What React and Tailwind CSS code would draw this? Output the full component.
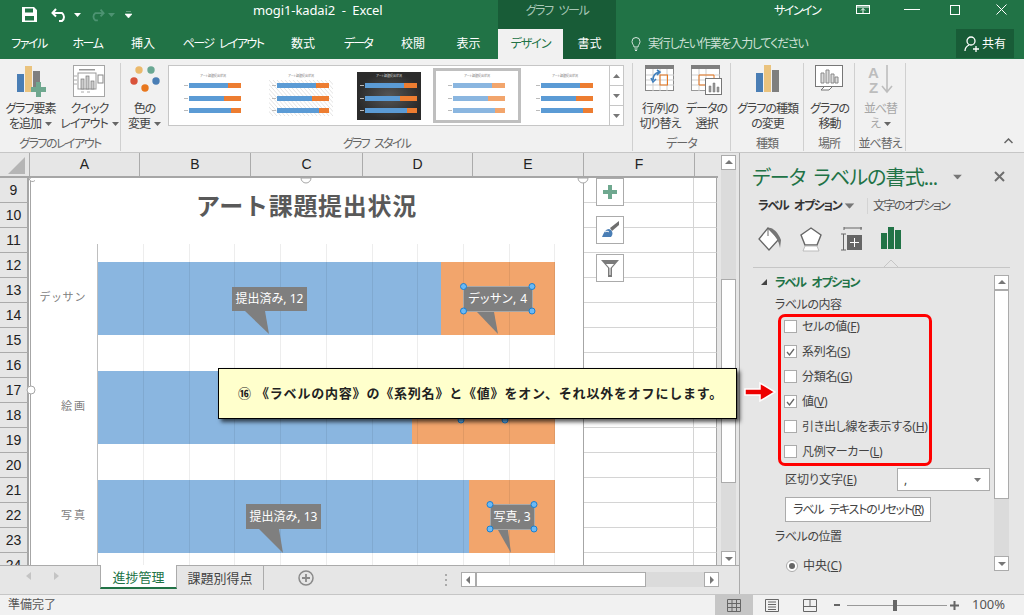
import React from "react";

const ROWS = [9, 10, 11, 12, 13, 14, 15, 16, 17, 18, 19, 20, 21, 22, 23, 24];
const COLS = [
  { name: "A", w: "w-[110px]" },
  { name: "B", w: "w-[111px]" },
  { name: "C", w: "w-[112px]" },
  { name: "D", w: "w-[110px]" },
  { name: "E", w: "w-[111px]" },
  { name: "F", w: "w-[111px]" },
];
const TABS = [
  { label: "ファイル", w: "w-[58px]", t: "tracking-[-1.5px]" },
  { label: "ホーム", w: "w-[59px]", t: "tracking-[-1.5px]" },
  { label: "挿入", w: "w-[52px]", t: "" },
  { label: "ページ レイアウト", w: "w-[108px]", t: "tracking-[-1.600px] [word-spacing:4px]" },
  { label: "数式", w: "w-[52px]", t: "" },
  { label: "データ", w: "w-[58px]", t: "tracking-[-1.800px]" },
  { label: "校閲", w: "w-[52px]", t: "" },
  { label: "表示", w: "w-[59px]", t: "" },
];
const GRID_X = [143, 189, 234, 280, 326, 372, 417, 463, 509, 554];
const BARS = [
  { y: 262, split: 441, name: "デッサン", labelY: 301 },
  { y: 371, split: 412, name: "絵画", labelY: 410 },
  { y: 480, split: 469, name: "写真", labelY: 519 },
];
const CHECKS = [
  { text: "セルの値", key: "F", on: false },
  { text: "系列名", key: "S", on: true },
  { text: "分類名", key: "G", on: false },
  { text: "値", key: "V", on: true },
  { text: "引き出し線を表示する", key: "H", on: false },
  { text: "凡例マーカー", key: "L", on: false },
];
const HATCH = [-28, -24, -20, -16, -12, -8, -4, 0, 4, 8, 12, 16, 20, 24, 28, 32, 36, 40, 44, 48, 52, 56, 60];

function Caret({ className = "" }) {
  return (
    <svg width="7" height="4" viewBox="0 0 7 4" className={"inline-block " + className}>
      <path d="M0 0h7L3.5 4z" fill="currentColor" />
    </svg>
  );
}

function Thumb({ variant }) {
  const dark = variant === "dark";
  const light = variant === "light";
  const blue = light ? "#8ab6e0" : "#5b9bd5";
  const orange = light ? "#f2a56c" : "#ed7d31";
  const splits = [39, 35, 42];
  return (
    <svg width="64" height="48" viewBox="0 0 64 48" className="block shrink-0">
      <defs>
        <radialGradient id="darkBg">
          <stop offset="0" stopColor="#555" />
          <stop offset="1" stopColor="#2b2b2b" />
        </radialGradient>
      </defs>
      <rect width="64" height="48" fill={dark ? "url(#darkBg)" : "#fff"} />
      {variant === "hatch" &&
        HATCH.map((x) => (
          <path key={x} d={`M${x} 8L${x + 32} 44`} stroke="#d8d8d8" strokeWidth="0.7" />
        ))}
      <text x="32" y="5" fontSize="3" textAnchor="middle" fill={dark ? "#ddd" : "#777"}>
        アート課題提出状況
      </text>
      {[11, 24, 36].map((y, i) => (
        <g key={y}>
          <rect x="3" y={y + 2} width="4" height="1" fill="#bbb" />
          <rect x="8" y={y} width={splits[i]} height="5" fill={blue} />
          <rect x={8 + splits[i]} y={y} width={52 - splits[i]} height="5" fill={orange} />
        </g>
      ))}
    </svg>
  );
}

function Big({ icon, lines, caret, w = "w-[54px]", muted }) {
  return (
    <div className={"flex flex-col items-center shrink-0 tracking-[-1px] " + w + (muted ? " text-[#a6a6a6]" : " text-[#444]")}>
      <div className="h-[36px] flex items-start justify-center">{icon}</div>
      {lines.map((line, i) => (
        <div key={i} className="text-[12px] leading-[15px] whitespace-nowrap">
          {line}
          {caret && i === lines.length - 1 && <Caret className="ml-[4px] mb-[2px] text-[#666]" />}
        </div>
      ))}
    </div>
  );
}

function Group({ w, label, children, last, t = "tracking-[-1px]" }) {
  return (
    <div className={"h-[88px] flex flex-col shrink-0 " + w + (last ? "" : " border-r border-[#d0d0d0]")}>
      <div className="flex-1 flex pt-[2px] min-h-0">{children}</div>
      <div className={"text-[12px] leading-[15px] text-[#666] text-center whitespace-nowrap h-[15px] " + t}>{label}</div>
    </div>
  );
}

const AddElementIcon = (
  <svg width="30" height="32" viewBox="0 0 30 32">
    <rect x="1" y="9" width="7" height="18" fill="#4a7eb5" />
    <rect x="9" y="1" width="7" height="26" fill="#eac37e" />
    <rect x="17" y="6" width="7" height="21" fill="#7f7f7f" />
    <path d="M20 17h5v5h5v5h-5v5h-5v-5h-5v-5h5z" fill="#6fa88f" />
  </svg>
);
const QuickIcon = (
  <svg width="33" height="32" viewBox="0 0 33 32">
    <rect x="0.5" y="0.5" width="31" height="31" fill="#fff" stroke="#a6a6a6" />
    <rect x="6" y="4" width="16" height="1.5" fill="#999" />
    <rect x="5" y="8" width="18" height="16" fill="none" stroke="#999" />
    <rect x="8" y="14" width="3" height="10" fill="#ccc" stroke="#777" strokeWidth="0.7" />
    <rect x="13" y="11" width="3" height="13" fill="#ccc" stroke="#777" strokeWidth="0.7" />
    <rect x="18" y="16" width="3" height="8" fill="#ccc" stroke="#777" strokeWidth="0.7" />
    <rect x="25" y="10" width="5" height="8" fill="#fff" stroke="#888" />
    <path d="M1 11h3M1 15h3M1 19h3M8 27h3M14 27h3" stroke="#aaa" />
  </svg>
);
const ColorsIcon = (
  <svg width="30" height="28" viewBox="0 0 30 28">
    <circle cx="9" cy="5" r="3.7" fill="#ebb96b" />
    <circle cx="21" cy="5" r="3.7" fill="#6aa893" />
    <circle cx="4" cy="16" r="3.7" fill="#d9533a" />
    <circle cx="26" cy="16" r="3.7" fill="#4a7eb5" />
    <circle cx="15" cy="23" r="3.7" fill="#e8771e" />
  </svg>
);
const SwitchIcon = (
  <svg width="30" height="27" viewBox="0 0 30 27">
    <rect x="0.5" y="0.5" width="28" height="25" fill="#fff" stroke="#888" />
    <rect width="29" height="4" fill="#7f7f7f" />
    <path d="M1 10h28M1 15h28M1 20h28M8 4v22M15 4v22M22 4v22" stroke="#cfcfcf" />
    <rect x="15" y="10" width="7.5" height="10" fill="none" stroke="#e8771e" />
    <path d="M14 7c-4 1-6 4-6 8M6 13l2 4 3-3M12 5l3 2-3 3" fill="none" stroke="#3f7fbd" strokeWidth="1.6" />
  </svg>
);
const SelectIcon = (
  <svg width="32" height="30" viewBox="0 0 32 30">
    <rect x="0.5" y="0.5" width="28" height="25" fill="#fff" stroke="#999" />
    <rect width="29" height="4" fill="#7f7f7f" />
    <path d="M1 10h28M1 15h28M1 20h28M8 4v22M15 4v22" stroke="#cfcfcf" />
    <path d="M8 10h15v10H8z" fill="none" stroke="#e8771e" />
    <rect x="14.5" y="13.5" width="16" height="16" fill="#fff" stroke="#777" />
    <path d="M18 27v-6h2v6zM22 27V18h2v9zM26 27v-5h2v5z" fill="#999" stroke="#777" strokeWidth="0.5" />
  </svg>
);
const TypeIcon = (
  <svg width="24" height="27" viewBox="0 0 24 27">
    <rect y="8" width="7" height="19" fill="#4a7eb5" />
    <rect x="8" width="7" height="27" fill="#eac37e" />
    <rect x="16" y="5" width="7" height="22" fill="#7f7f7f" />
  </svg>
);
const MoveIcon = (
  <svg width="29" height="26" viewBox="0 0 29 26">
    <rect x="0.5" y="0.5" width="27" height="21" fill="#fff" stroke="#777" />
    <path d="M6 18V8h3v10zM11 18V5h3v13zM16 18V9h3v9zM20 18v-6h3v6z" fill="#ddd" stroke="#888" />
    <path d="M9 22l-3 3h8l3-3" fill="#fff" stroke="#777" />
  </svg>
);
const SortIcon = (
  <svg width="26" height="29" viewBox="0 0 26 29">
    <text x="0" y="13" fontSize="15" fontWeight="700" fill="#bdbdbd" fontFamily="'Liberation Sans', sans-serif">A</text>
    <text x="1" y="28" fontSize="15" fontWeight="700" fill="#bdbdbd" fontFamily="'Liberation Sans', sans-serif">Z</text>
    <path d="M19 0v27M14 21l5 6 5-6" fill="none" stroke="#bdbdbd" strokeWidth="1.6" />
  </svg>
);

function Pointer({ d }) {
  return <path d={d} fill="#7f7f7f" />;
}

function Handles({ pts }) {
  return pts.map(([x, y]) => (
    <circle key={x + "-" + y} cx={x} cy={y} r="3" fill="#6cb9f5" stroke="#1b7fd0" strokeWidth="1" />
  ));
}

function Chart() {
  return (
    <svg
      width="590"
      height="388"
      viewBox="0 178 590 388"
      className="absolute left-0 top-0"
    >
      <rect x="30.5" y="177.500" width="553" height="390" fill="#fff" stroke="#a6a6a6" />
      <text x="306.5" y="215" textAnchor="middle" fontSize="24" fontWeight="700" letterSpacing="0.7" fill="#595959" style={{ fontFeatureSettings: "normal" }}>
        アート課題提出状況
      </text>
      <path d="M97.5 244V566" stroke="#bfbfbf" />
      {BARS.map((b) => (
        <g key={b.name}>
          <rect x="98" y={b.y} width={b.split - 98} height="73" fill="#8ab6e0" />
          <rect x={b.split} y={b.y} width={555 - b.split} height="73" fill="#f2a56c" />
          <text x="87" y={b.labelY} textAnchor="end" fontSize="11" letterSpacing="2" fill="#7f7f7f">
            {b.name}
          </text>
        </g>
      ))}
      {GRID_X.map((x) => (
        <path key={x} d={`M${x + 0.5} 244V566`} stroke="#000" strokeOpacity="0.07" />
      ))}

      <rect x="232" y="287" width="75" height="24" fill="#7f7f7f" />
      <Pointer d="M245 311L269 334L265 311z" />
      <text x="269.5" y="303" textAnchor="middle" fontSize="12" fill="#fff">提出済み, 12</text>

      <rect x="463.5" y="286.5" width="69" height="25" fill="#7f7f7f" stroke="#a8a8a8" />
      <Pointer d="M477 312L498 334L494 312z" />
      <text x="498" y="303" textAnchor="middle" fontSize="12" letterSpacing="0.5" fill="#fff">デッサン, 4</text>
      <Handles pts={[[463.5, 286.5], [532, 286.5], [463.5, 311], [532, 311]]} />

      <Handles pts={[[461, 420], [505, 420]]} />

      <rect x="246" y="504" width="75" height="25" fill="#7f7f7f" />
      <Pointer d="M259 529L283 553L279 529z" />
      <text x="283.5" y="521" textAnchor="middle" fontSize="12" fill="#fff">提出済み, 13</text>

      <rect x="490.5" y="504.5" width="44" height="25" fill="#7f7f7f" stroke="#a8a8a8" />
      <Pointer d="M498 530L511 553L508 530z" />
      <text x="512" y="521" textAnchor="middle" fontSize="12" fill="#fff">写真, 3</text>
      <Handles pts={[[490, 504.5], [534, 504.5], [490, 529], [534, 529]]} />

      <path d="M29 178a3.500 3.500 0 0 0 6 2.500" fill="#fff" stroke="#a6a6a6" />
      <path d="M301 178a5 5 0 0 0 10 0z" fill="#fff" stroke="#a6a6a6" />
      <path d="M578 178a5 5 0 0 0 10 0z" fill="#fff" stroke="#a6a6a6" />
      <circle cx="31" cy="390" r="4" fill="#fff" stroke="#a6a6a6" />
    </svg>
  );
}

function ChartButton({ children }) {
  return (
    <div className="w-[28px] h-[28px] bg-white border border-[#ababab] flex items-center justify-center">
      {children}
    </div>
  );
}

function ScrollBtn({ dir, className = "" }) {
  const d = { up: "M1 6L5 2l4 4z", down: "M1 3l4 4 4-4z", left: "M6 1L2 5l4 4z", right: "M3 1l4 4-4 4z" }[dir];
  return (
    <div className={"w-[15px] h-[15px] bg-white border border-[#ababab] flex items-center justify-center shrink-0 " + className}>
      <svg width="10" height="10" viewBox="0 0 10 10">
        <path d={d} fill="#777" />
      </svg>
    </div>
  );
}

function Sheet() {
  return (
    <div className="w-[739px] shrink-0 flex flex-col bg-[#e6e6e6]">
      <div className="flex h-[413px] shrink-0">
        <div className="w-[718px] flex flex-col shrink-0">
          {/* 列ヘッダー */}
          <div className="h-[25px] flex border-b-2 border-[#a6a6a6] shrink-0">
            <div className="w-[29px] relative shrink-0">
              <svg width="18" height="18" viewBox="0 0 18 18" className="absolute left-[8px] top-[4px]">
                <path d="M17 0v17H0z" fill="#b5b5b5" />
              </svg>
            </div>
            {COLS.map((c) => (
              <div
                key={c.name}
                className={c.w + " shrink-0 border-l border-[#ababab] text-center text-[14px] leading-[23px] text-[#222] font-['Liberation_Sans',sans-serif]"}
              >
                {c.name}
              </div>
            ))}
            <div className="w-[23px] border-l border-[#ababab] shrink-0" />
          </div>

          {/* 行ヘッダー + グリッド */}
          <div className="relative overflow-hidden h-[388px]">
            <div className="flex flex-col">
              {ROWS.map((r) => (
                <div key={r} className="flex h-[25px] shrink-0">
                  <div className="w-[29px] border-b border-[#ababab] border-r-2 border-r-[#a6a6a6] text-center text-[14px] leading-[24px] text-[#222] font-['Liberation_Sans',sans-serif] shrink-0">
                    {r}
                  </div>
                  <div className="w-[554px] bg-white shrink-0" />
                  <div className="w-[111px] bg-white border-b border-r border-[#d4d4d4] shrink-0" />
                  <div className="w-[23px] bg-white border-b border-[#d4d4d4] border-r border-r-[#a6a6a6] shrink-0" />
                </div>
              ))}
            </div>
            <Chart />
            <div className="absolute left-[596px] top-0 flex flex-col gap-[10px]">
              <ChartButton>
                <svg width="16" height="16" viewBox="0 0 16 16">
                  <path d="M6 1h4v5h5v4h-5v5H6v-5H1V6h5z" fill="#6fa88f" />
                </svg>
              </ChartButton>
              <ChartButton>
                <svg width="20" height="20" viewBox="0 0 20 20">
                  <path d="M19 1l-9 7 2 3 7-6z" fill="#6e6e6e" />
                  <path d="M9 9c-3 0-5 3-7 8h9c2-2 2-5 0-7z" fill="#4a7eb5" />
                  <path d="M5 12c1-1 3-1 4 0" stroke="#fff" fill="none" />
                </svg>
              </ChartButton>
              <ChartButton>
                <svg width="20" height="20" viewBox="0 0 20 20">
                  <path d="M1 2h18l-7 8v9H8v-9zM6 6l3.5 4v7h1v-7l3.500-4z" fill="#7a7a7a" fillRule="evenodd" />
                </svg>
              </ChartButton>
            </div>
          </div>
        </div>

        {/* 縦スクロール */}
        <div className="ml-[3px] mt-[2px] w-[15px] flex flex-col bg-[#dbdbdb] shrink-0 h-[411px]">
          <ScrollBtn dir="up" />
          <div className="h-[109px]" />
          <div className="h-[204px] bg-white border border-[#ababab]" />
          <div className="flex-1" />
          <ScrollBtn dir="down" />
        </div>
      </div>

      {/* シートタブ */}
      <div className="h-[28px] flex items-start shrink-0 border-t border-[#ababab] -mt-px relative">
        <div className="w-[100px] h-[20px] flex items-center pl-[26px] gap-[22px] shrink-0">
          <svg width="6" height="8" viewBox="0 0 6 8"><path d="M5 0v8L0 4z" fill="#c4c4c4" /></svg>
          <svg width="6" height="8" viewBox="0 0 6 8"><path d="M0 0v8l5-4z" fill="#c4c4c4" /></svg>
        </div>
        <div className="w-[77px] h-[24px] bg-white border-x border-[#ababab] border-b-2 border-b-[#217346] -mt-px text-[#217346] text-[13px] leading-[24px] text-center shrink-0">
          進捗管理
        </div>
        <div className="w-[87px] h-[24px] border-r border-[#ababab] text-[#444] text-[13px] leading-[24px] text-center shrink-0">
          課題別得点
        </div>
        <svg width="16" height="16" viewBox="0 0 16 16" className="ml-[34px] mt-[4px] shrink-0">
          <circle cx="8" cy="8" r="7" fill="none" stroke="#8a8a8a" strokeWidth="1.5" />
          <path d="M8 4v8M4 8h8" stroke="#8a8a8a" strokeWidth="1.8" />
        </svg>
        <div className="ml-[131px] mt-[8px] flex flex-col gap-[3px] shrink-0">
          <div className="w-[2px] h-[2px] bg-[#aaa]" />
          <div className="w-[2px] h-[2px] bg-[#aaa]" />
          <div className="w-[2px] h-[2px] bg-[#aaa]" />
        </div>
        <div className="ml-[14px] mt-[6px] w-[258px] h-[15px] flex bg-[#dbdbdb] shrink-0">
          <ScrollBtn dir="left" />
          <div className="w-[170px] bg-white border border-[#ababab]" />
          <div className="flex-1" />
          <ScrollBtn dir="right" />
        </div>
      </div>
    </div>
  );
}

function Pane() {
  return (
    <div className="flex-1 bg-[#e6e6e6] border-l border-[#ababab] flex flex-col overflow-hidden relative">
      <div className="h-[41px] flex items-start pl-[12px] pt-[11px] shrink-0">
        <div className="text-[20px] leading-[28px] text-[#217346] whitespace-nowrap w-[199px] tracking-[-0.900px] [word-spacing:4px]">データ ラベルの書式...</div>
        <Caret className="mt-[11px] ml-[3px] text-[#777] scale-[1.3]" />
        <svg width="11" height="11" viewBox="0 0 11 11" className="ml-[33px] mt-[7px]">
          <path d="M1 1l9 9M10 1l-9 9" stroke="#6e6e6e" strokeWidth="2" />
        </svg>
      </div>
      <div className="h-[24px] flex items-center pl-[18px] shrink-0 text-[12px] whitespace-nowrap">
        <span className="font-bold text-[#333] w-[87px] tracking-[-1.400px] [word-spacing:4px]">ラベル オプション</span>
        <Caret className="scale-[1.4] text-[#777] ml-[1px]" />
        <span className="w-px h-[16px] bg-[#d4d4d4] ml-[14px]" />
        <span className="text-[#555] ml-[5px] tracking-[-1.500px]">文字のオプション</span>
      </div>

      <div className="h-[49px] flex items-start pl-[18px] gap-[17px] shrink-0 pt-[9px]">
        <svg width="25" height="25" viewBox="0 0 25 25">
          <path d="M10 1L1 12l10 11 10-11z" fill="#fff" stroke="#666" strokeWidth="1.3" />
          <path d="M10 1c4-1 10 4 13 12l-1 8c-1-6-3-9-6-13" fill="#777" />
          <path d="M10 1v8" stroke="#666" />
        </svg>
        <svg width="22" height="25" viewBox="0 0 22 25">
          <path d="M11 1l10 7-4 10H5L1 8z" fill="#fff" stroke="#666" strokeWidth="1.4" />
          <path d="M5 19h12l2 5H3z" fill="#fff" stroke="#bbb" />
        </svg>
        <svg width="22" height="24" viewBox="0 0 22 24" className="ml-[1px]">
          <path d="M4 1h18M4 0v3M21 0v3M1 7h5M1 23h5M3.500 7v16" stroke="#666" fill="none" />
          <rect x="7" y="8" width="15" height="15" fill="#666" />
          <path d="M14.500 11v9M10 15.500h9" stroke="#fff" />
        </svg>
        <svg width="20" height="22" viewBox="0 0 20 22" className="ml-[2px]">
          <rect y="6" width="6" height="16" fill="#217346" />
          <rect x="7" width="6" height="22" fill="#217346" />
          <rect x="14" y="3" width="6" height="19" fill="#217346" />
        </svg>
      </div>

      <div className="relative ml-[13px] mr-[14px] h-[1px] bg-[#c6c6c6] shrink-0">
        <svg width="14" height="7" viewBox="0 0 14 7" className="absolute left-[131px] -top-[7px]">
          <path d="M0 7L7 0l7 7" fill="#e6e6e6" stroke="#c6c6c6" />
        </svg>
      </div>

      <div className="flex flex-1 min-h-0 pt-[7px]">
        <div className="w-[254px] pl-[35px] shrink-0 relative text-[12px] text-[#444]">
          <div className="flex items-center h-[16px] relative whitespace-nowrap">
            <svg width="6" height="6" viewBox="0 0 6 6" className="absolute -left-[14px] top-[4px]">
              <path d="M6 0v6H0z" fill="#444" />
            </svg>
            <span className="font-bold text-[#217346] tracking-[-1.300px] [word-spacing:4px]">ラベル オプション</span>
          </div>
          <div className="h-[22px] leading-[27px] whitespace-nowrap tracking-[-0.500px]">ラベルの内容</div>
          <div className="h-[152px] w-[154px] ml-[3px] mt-[1px] border-[3px] border-[#ff0000] rounded-[7px] pl-[3px] shrink-0">
            <div className="-mt-[3px] flex flex-col">
              {CHECKS.map((c) => (
                <div key={c.key} className="h-[25px] shrink-0 flex items-center gap-[5px] whitespace-nowrap tracking-[-0.300px]">
                  <span className="w-[13px] h-[13px] bg-white border border-[#ababab] flex items-center justify-center shrink-0">
                    {c.on && (
                      <svg width="9" height="8" viewBox="0 0 9 8">
                        <path d="M1 4l2.500 3L8 1" fill="none" stroke="#666" strokeWidth="1.3" />
                      </svg>
                    )}
                  </span>
                  <span>
                    {c.text}(<span className="underline">{c.key}</span>)
                  </span>
                </div>
              ))}
            </div>
          </div>
          <div className="flex items-center mt-[2px] h-[23px] pl-[10px] whitespace-nowrap">
            <span className="w-[112px]">区切り文字(<span className="underline">E</span>)</span>
            <div className="w-[93px] h-[23px] bg-white border border-[#ababab] flex items-center justify-between px-[6px] pr-[8px] shrink-0">
              <span>,</span>
              <Caret className="text-[#777]" />
            </div>
          </div>
          <div className="ml-[10px] mt-[6px] w-[146px] h-[25px] bg-white border border-[#ababab] text-center leading-[23px] whitespace-nowrap tracking-[-1.200px] [word-spacing:4px]">
            ラベル テキストのリセット(<span className="underline">R</span>)
          </div>
          <div className="h-[30px] leading-[30px] whitespace-nowrap tracking-[-0.500px]">ラベルの位置</div>
          <div className="flex items-center gap-[5px] ml-[11px] mt-[6px] h-[16px] whitespace-nowrap">
            <span className="w-[12px] h-[12px] rounded-full bg-white border border-[#ababab] flex items-center justify-center">
              <span className="w-[6px] h-[6px] rounded-full bg-[#666]" />
            </span>
            <span>中央(<span className="underline">C</span>)</span>
          </div>
        </div>
        <div className="w-[15px] h-[296px] flex flex-col bg-[#dbdbdb] shrink-0">
          <ScrollBtn dir="up" />
          <div className="h-[209px] bg-white border border-[#ababab]" />
          <div className="flex-1" />
          <ScrollBtn dir="down" />
        </div>
      </div>
    </div>
  );
}

export default function App() {
  return (
    <div className="w-[1024px] h-[615px] flex flex-col overflow-hidden relative bg-[#e6e6e6] font-['Noto_Sans','Noto_Sans_CJK_JP',sans-serif] [font-feature-settings:'palt']">
      {/* タイトルバー */}
      <div className="h-[29px] bg-[#217346] flex text-white shrink-0">
        <div className="w-[253px] flex items-center pl-[22px] shrink-0">
          <svg width="15" height="15" viewBox="0 0 15 15">
            <path d="M0 0h12l3 3v12H0zM3 1.500v4h8v-4zM3 9v4.500h9V9z" fill="#fff" fillRule="evenodd" />
          </svg>
          <svg width="18" height="14" viewBox="0 0 18 14" className="ml-[14px]">
            <path d="M5 1L1.500 5 5 8.500M2 5h9a5 5 0 0 1 0 8H8" fill="none" stroke="#fff" strokeWidth="2" />
          </svg>
          <Caret className="ml-[5px] text-white" />
          <svg width="16" height="14" viewBox="0 0 18 14" className="ml-[8px]">
            <path d="M13 1l3.500 4L13 8.500M16 5H7a5 5 0 0 0 0 8h3" fill="none" stroke="#4d9372" strokeWidth="2" />
          </svg>
          <Caret className="ml-[3px] text-[#4d9372]" />
          <svg width="7" height="7" viewBox="0 0 7 7" className="ml-[10px]">
            <path d="M1 0h5M0 3h7L3.500 7z" fill="#fff" stroke="#fff" strokeWidth="0.6" />
          </svg>
        </div>
        <div className="w-[245px] text-[13px] leading-[20px] whitespace-pre shrink-0 tracking-[-0.100px]">mogi1-kadai2  -  Excel</div>
        <div className="w-[118px] bg-[#185c37] text-[#a9c8b7] text-[12px] leading-[21px] text-center shrink-0 tracking-[-1.400px] [word-spacing:4px]">グラフ ツール</div>
        <div className="ml-[158px] text-[12px] leading-[21px] whitespace-nowrap w-[82px] tracking-[-1.500px]">サインイン</div>
        <svg width="14" height="10" viewBox="0 0 14 10" className="mt-[5px] shrink-0">
          <rect x="0.5" y="0.500" width="13" height="8" fill="none" stroke="#fff" />
          <path d="M0 2h14M7 8V3.500M5 5.500l2-2 2 2" stroke="#fff" fill="none" />
        </svg>
        <div className="w-[16px] h-[1px] bg-white mt-[9px] ml-[34px] shrink-0" />
        <div className="w-[10px] h-[10px] border border-white mt-[5px] ml-[30px] shrink-0" />
        <svg width="11" height="11" viewBox="0 0 11 11" className="ml-[36px] mt-[4px] shrink-0">
          <path d="M0.500 0.500l10 10M10.500 0.500l-10 10" stroke="#fff" />
        </svg>
      </div>

      {/* タブ */}
      <div className="h-[30px] bg-[#217346] flex text-white text-[12px] shrink-0 leading-[30px]">
        {TABS.map((t) => (
          <div key={t.label} className={t.w + " " + t.t + " text-center whitespace-nowrap shrink-0"}>{t.label}</div>
        ))}
        <div className="w-[65px] bg-[#f1f1f1] text-[#217346] text-center shrink-0 tracking-[-1px]">デザイン</div>
        <div className="w-[53px] bg-[#185c37] text-center shrink-0">書式</div>
        <svg width="10" height="14" viewBox="0 0 10 14" className="ml-[15px] mt-[8px] shrink-0">
          <path d="M3 10C3 8 1 7 1 4.500a4 4 0 0 1 8 0C9 7 7 8 7 10zM3.500 12h3M4 13.500h2" fill="none" stroke="#d8e6df" />
        </svg>
        <div className="ml-[7px] text-[#cfe0d7] whitespace-nowrap w-[308px] tracking-[-1.200px]">実行したい作業を入力してください</div>
        <div className="w-[58px] h-[29px] bg-[#185c37] flex items-center justify-center gap-[3px] shrink-0">
          <svg width="15" height="16" viewBox="0 0 15 16">
            <circle cx="7" cy="5" r="4" fill="none" stroke="#fff" strokeWidth="1.3" />
            <path d="M1 15c0-3 2-5 4-6M9 13h6M12 10v6" stroke="#fff" fill="none" strokeWidth="1.3" />
          </svg>
          <span>共有</span>
        </div>
      </div>

      {/* リボン */}
      <div className="h-[94px] bg-[#f1f1f1] border-b border-[#c6c6c6] flex pt-[4px] shrink-0 relative">
        <Group w="w-[121px]" label="グラフのレイアウト" t="tracking-[-1.500px]">
          <Big w="w-[61px]" icon={AddElementIcon} lines={["グラフ要素", "を追加"]} caret />
          <Big w="w-[59px] -ml-[2px] pl-[2px]" icon={QuickIcon} lines={["クイック", "レイアウト"]} caret />
        </Group>
        <Group w="w-[512px]" label="グラフ スタイル" t="tracking-[-1.800px] [word-spacing:4px]">
          <div className="w-[47px] shrink-0">
            <Big w="w-[47px]" icon={ColorsIcon} lines={["色の", "変更"]} caret />
          </div>
          <div className="w-[456px] h-[61px] ml-0 bg-white border border-[#c6c6c6] flex items-center shrink-0">
            <div className="flex-1 flex items-center h-full pl-[12px]">
              <div className="w-[88px]"><Thumb variant="plain" /></div>
              <div className="w-[88px]"><Thumb variant="hatch" /></div>
              <div className="w-[76px]"><Thumb variant="dark" /></div>
              <div className="w-[88px] h-[55px] border-[3px] border-[#bfbfbf] flex items-center justify-center shrink-0"><Thumb variant="light" /></div>
              <div className="ml-[12px]"><Thumb variant="plain" /></div>
            </div>
            <div className="w-[14px] h-full flex flex-col border-l border-[#c6c6c6] shrink-0 divide-y divide-[#c6c6c6] text-[#777]">
              <div className="flex-1 flex items-center justify-center"><Caret className="rotate-180" /></div>
              <div className="flex-1 flex items-center justify-center"><Caret /></div>
              <div className="flex-1 flex items-center justify-center"><Caret /></div>
            </div>
          </div>
        </Group>
        <Group w="w-[98px]" label="データ">
          <Big w="w-[46px] ml-[4px]" icon={SwitchIcon} lines={["行/列の", "切り替え"]} />
          <Big w="w-[43px] ml-[2px]" icon={SelectIcon} lines={["データの", "選択"]} />
        </Group>
        <Group w="w-[73px]" label="種類">
          <Big w="w-[73px]" icon={TypeIcon} lines={["グラフの種類", "の変更"]} />
        </Group>
        <Group w="w-[51px]" label="場所">
          <Big w="w-[51px]" icon={MoveIcon} lines={["グラフの", "移動"]} />
        </Group>
        <Group w="w-[51px]" label="並べ替え">
          <Big w="w-[51px]" muted icon={SortIcon} lines={["並べ替", "え"]} caret />
        </Group>
        <svg width="9" height="6" viewBox="0 0 9 6" className="absolute right-[11px] bottom-[8px]">
          <path d="M0.500 5L4.500 1l4 4" fill="none" stroke="#666" strokeWidth="1.5" />
        </svg>
      </div>

      {/* 本体 */}
      <div className="flex flex-1 min-h-0 overflow-hidden">
        <Sheet />
        <Pane />
      </div>

      {/* ステータスバー */}
      <div className="h-[21px] bg-[#f1f1f1] border-t border-[#c6c6c6] flex items-center text-[12px] text-[#555] shrink-0">
        <div className="w-[715px] pl-[8px] shrink-0">準備完了</div>
        <div className="w-[38px] h-full bg-[#c6c6c6] flex items-center justify-center shrink-0">
          <svg width="14" height="13" viewBox="0 0 14 13">
            <path d="M0.500 0.500h13v12h-13zM0.500 4.500h13M0.500 8.500h13M5 0.500v12M9.500 0.500v12" fill="none" stroke="#666" />
          </svg>
        </div>
        <svg width="14" height="13" viewBox="0 0 14 13" className="ml-[12px] shrink-0">
          <path d="M0.500 0.500h13v12h-13zM3 3h8M3 5.500h8M3 8h8M3 10.500h8" fill="none" stroke="#666" />
        </svg>
        <svg width="14" height="13" viewBox="0 0 14 13" className="ml-[24px] shrink-0">
          <path d="M0.500 0.500h13v12h-13zM0.500 7.500h13M7 0.500v7" fill="none" stroke="#666" />
        </svg>
        <div className="w-[6px] h-[2px] bg-[#666] ml-[17px] shrink-0" />
        <div className="w-[100px] h-px bg-[#999] ml-[7px] relative shrink-0">
          <div className="absolute left-[46px] -top-[5px] w-[4px] h-[11px] bg-[#666]" />
        </div>
        <svg width="9" height="9" viewBox="0 0 9 9" className="ml-[3px] shrink-0">
          <path d="M4.500 0v9M0 4.500h9" stroke="#666" strokeWidth="2" />
        </svg>
        <div className="ml-[13px] whitespace-nowrap text-[13px]">100%</div>
      </div>

      {/* 吹き出し */}
      <div className="absolute left-[218px] top-[368px] w-[519px] h-[51px] bg-[#ffffcc] border border-black shadow-[3px_3px_4px_rgba(0,0,0,0.65)] flex items-center pl-[19px] text-[13px] font-bold text-[#222] whitespace-nowrap [font-feature-settings:normal] tracking-[0.800px]">
        ⑯ 《ラベルの内容》の《系列名》と《値》をオン、それ以外をオフにします。
      </div>
      <svg width="32" height="22" viewBox="0 0 32 22" className="absolute left-[744px] top-[381px]">
        <path d="M1 8h15V2l15 9-15 9v-6H1z" fill="#ee0000" stroke="#fff" strokeWidth="1.5" />
      </svg>
    </div>
  );
}
